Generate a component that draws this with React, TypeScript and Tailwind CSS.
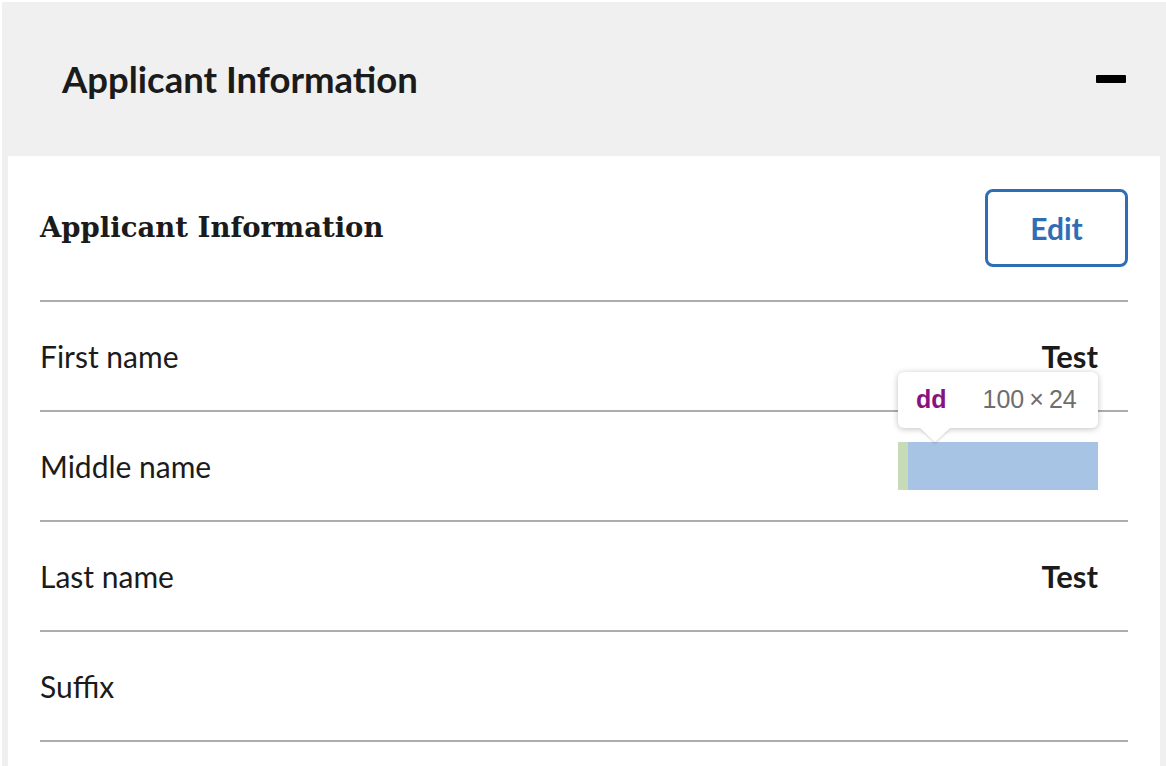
import React from "react";

const sans = { fontFamily: "Lato, 'Noto Sans', sans-serif" };
const serif = { fontFamily: "'DejaVu Serif', 'Liberation Serif', serif" };
const mono = { fontFamily: "'Liberation Sans', Arial, sans-serif" };

function Row({ label, value, children }: { label: string; value?: string; children?: React.ReactNode }) {
  return (
    <div className="relative flex h-[110px] shrink-0 items-center justify-between border-b-2 border-[#adadb0] pr-[30px]">
      <span className="text-[30px] text-[#1b1b1b]" style={sans}>{label}</span>
      {value ? <span className="text-[31px] font-bold text-[#1b1b1b]" style={sans}>{value}</span> : null}
      {children}
    </div>
  );
}

export default function App() {
  return (
    <div className="h-[766px] w-[1166px] overflow-hidden bg-white pl-[2px] pt-[2px]">
      <div className="flex h-full w-full flex-col bg-[#f0f0f0]">
        <div className="flex h-[154px] shrink-0 items-center justify-between pl-[60px] pr-[40px]">
          <h2 className="text-[36.5px] font-bold text-[#1b1b1b]" style={sans}>Applicant Information</h2>
          <div className="h-[8px] w-[30px] rounded-[1px] bg-black" />
        </div>
        <div className="mx-[6px] flex flex-1 flex-col bg-white px-[32px]">
          <div className="flex shrink-0 items-center justify-between border-b-2 border-[#adadb0] py-[33px]">
            <h3 className="text-[27.5px] font-bold text-[#1b1b1b]" style={serif}>Applicant Information</h3>
            <button className="flex h-[78px] w-[143px] items-center justify-center rounded-[8px] border-[3px] border-[#2e6eb5] text-[30px] font-bold text-[#2e6eb5]" style={sans}>
              Edit
            </button>
          </div>
          <Row label="First name" value="Test" />
          <Row label="Middle name">
            <div className="flex h-[48px] w-[200px]">
              <div className="w-[10px] bg-[#c8dbb8]" />
              <div className="flex-1 bg-[#a7c4e4]" />
            </div>
            <div className="absolute right-[30px] top-[-40px] z-10">
              <div className="relative flex h-[56px] w-[200px] items-center rounded-[6px] bg-white px-[18px] shadow-[0_1px_6px_rgba(0,0,0,0.25)]">
                <span className="text-[25px] font-bold text-[#881280]" style={mono}>dd</span>
                <span className="ml-[36px] text-[25px] text-[#6e6e6e]" style={mono}>100{"\u2009"}×{"\u2009"}24</span>
                <div className="absolute bottom-[-14px] left-[22px] h-0 w-0 border-x-[15px] border-t-[14px] border-x-transparent border-t-white drop-shadow-[0_2px_1px_rgba(0,0,0,0.12)]" />
              </div>
            </div>
          </Row>
          <Row label="Last name" value="Test" />
          <Row label="Suffix" />
        </div>
      </div>
    </div>
  );
}
